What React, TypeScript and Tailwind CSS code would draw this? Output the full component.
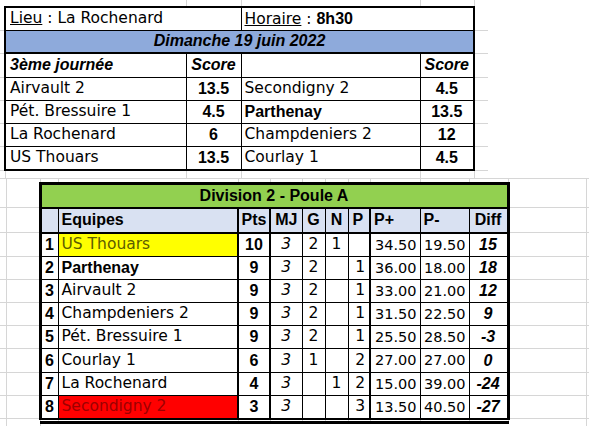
import React from 'react';

const gl = 'border-[#d6d6d6]';
const bold = "font-['Liberation_Sans'] font-bold text-[16px]";
const head = 'bg-[#d9e1f2]';

const matches = [
  { home: 'Airvault 2', hs: '13.5', away: 'Secondigny 2', as: '4.5' },
  { home: 'Pét. Bressuire 1', hs: '4.5', away: 'Parthenay', as: '13.5', awayBold: true },
  { home: 'La Rochenard', hs: '6', away: 'Champdeniers 2', as: '12' },
  { home: 'US Thouars', hs: '13.5', away: 'Courlay 1', as: '4.5' },
];

const standings = [
  { rank: 1, team: 'US Thouars', pts: 10, mj: 3, g: 2, n: 1, p: '', pp: '34.50', pm: '19.50', diff: '15', tone: 'yellow' },
  { rank: 2, team: 'Parthenay', pts: 9, mj: 3, g: 2, n: '', p: 1, pp: '36.00', pm: '18.00', diff: '18', teamBold: true },
  { rank: 3, team: 'Airvault 2', pts: 9, mj: 3, g: 2, n: '', p: 1, pp: '33.00', pm: '21.00', diff: '12' },
  { rank: 4, team: 'Champdeniers 2', pts: 9, mj: 3, g: 2, n: '', p: 1, pp: '31.50', pm: '22.50', diff: '9' },
  { rank: 5, team: 'Pét. Bressuire 1', pts: 9, mj: 3, g: 2, n: '', p: 1, pp: '25.50', pm: '28.50', diff: '-3' },
  { rank: 6, team: 'Courlay 1', pts: 6, mj: 3, g: 1, n: '', p: 2, pp: '27.00', pm: '27.00', diff: '0' },
  { rank: 7, team: 'La Rochenard', pts: 4, mj: 3, g: '', n: 1, p: 2, pp: '15.00', pm: '39.00', diff: '-24' },
  { rank: 8, team: 'Secondigny 2', pts: 3, mj: 3, g: '', n: '', p: 3, pp: '13.50', pm: '40.50', diff: '-27', tone: 'red' },
];

const rowHeights = ['h-[24px]', 'h-[23px]', 'h-[23px]', 'h-[23px]', 'h-[23px]', 'h-[24px]', 'h-[23px]', 'h-[23px]'];

function TopSheet() {
  const rows = ['h-[24px]', 'h-[23px]', 'h-[23px]', 'h-[23px]', 'h-[24px]'];
  return (
    <table className="table-fixed w-[589px]">
      <colgroup>
        <col className="w-[5px]" />
        <col className="w-[181px]" />
        <col className="w-[55px]" />
        <col className="w-[179px]" />
        <col className="w-[54px]" />
        <col className="w-[14px]" />
        <col className="w-[101px]" />
      </colgroup>
      <tbody>
        <tr className="h-[7px]">
          <td />
          <td className={`border-r ${gl}`} />
          <td className={`border-r ${gl}`} />
          <td className={`border-r ${gl}`} />
          <td className={`border-r ${gl}`} />
          <td />
          <td />
        </tr>
        <tr className="h-[23px]">
          <td className={`border-b ${gl}`} />
          <td colSpan={2} className="border-t-2 border-l-2 border-b border-r border-black pl-[4px]">
            <span className="underline">Lieu</span> : La Rochenard
          </td>
          <td colSpan={2} className="border-t-2 border-r-2 border-b border-black pl-[3px]">
            <span className="underline">Horaire</span> : <span className={bold}>8h30</span>
          </td>
          <td className={`border-b ${gl}`} />
          <td />
        </tr>
        <tr className="h-[23px]">
          <td className={`border-b ${gl}`} />
          <td colSpan={4} className={`border-l-2 border-r-2 border-b-2 border-black bg-[#8eaadb] text-center italic ${bold}`}>
            Dimanche 19 juin 2022
          </td>
          <td className={`border-b ${gl}`} />
          <td />
        </tr>
        <tr className="h-[24px]">
          <td className={`border-b ${gl}`} />
          <td className={`border-l-2 border-r border-b border-black pl-[4px] italic ${bold}`}>3ème journée</td>
          <td className={`border-r border-b border-black text-center italic ${bold}`}>Score</td>
          <td className="border-r border-b border-black" />
          <td className={`border-r-2 border-b border-black text-center italic ${bold}`}>Score</td>
          <td className={`border-b ${gl}`} />
          <td />
        </tr>
        {matches.map((m, i) => (
          <tr key={m.home} className={rows[i + 1]}>
            <td className={`border-b ${gl}`} />
            <td className={`border-l-2 border-r ${i === 3 ? 'border-b-2' : 'border-b'} border-black pl-[4px]`}>{m.home}</td>
            <td className={`border-r ${i === 3 ? 'border-b-2' : 'border-b'} border-black text-center ${bold}`}>{m.hs}</td>
            <td className={`border-r ${i === 3 ? 'border-b-2' : 'border-b'} border-black pl-[3px] ${m.awayBold ? bold : ''}`}>{m.away}</td>
            <td className={`border-r-2 ${i === 3 ? 'border-b-2' : 'border-b'} border-black text-center ${bold}`}>{m.as}</td>
            <td className={`border-b ${gl}`} />
            <td />
          </tr>
        ))}
        <tr className="h-[8px]">
          <td className={`border-r border-b ${gl}`} />
          <td className={`border-r border-b ${gl}`} />
          <td className={`border-r border-b ${gl}`} />
          <td className={`border-r border-b ${gl}`} />
          <td className={`border-r border-b ${gl}`} />
          <td className={`border-b ${gl}`} />
          <td className={`border-b ${gl}`} />
        </tr>
      </tbody>
    </table>
  );
}

function Margin() {
  return (
    <>
      <td className={`border-r border-b ${gl}`} />
      <td className={`border-b ${gl}`} />
    </>
  );
}

function Standings() {
  return (
    <table className="table-fixed w-[589px]">
      <colgroup>
        <col className="w-[6px]" />
        <col className="w-[34px]" />
        <col className="w-[18px]" />
        <col className="w-[180px]" />
        <col className="w-[32px]" />
        <col className="w-[32px]" />
        <col className="w-[23px]" />
        <col className="w-[23px]" />
        <col className="w-[22px]" />
        <col className="w-[50px]" />
        <col className="w-[49px]" />
        <col className="w-[39px]" />
        <col className="w-[78px]" />
        <col className="w-[3px]" />
      </colgroup>
      <tbody>
        <tr className="h-[5px]">
          {Array.from({ length: 13 }).map((_, i) => (
            <td key={i} className={`border-r ${gl}`} />
          ))}
          <td />
        </tr>
        <tr className="h-[24px]">
          <Margin />
          <td colSpan={10} className={`border-t-[3px] border-l-[3px] border-r-[3px] border-b-2 border-black bg-[#92d050] text-center ${bold}`}>
            Division 2 - Poule A
          </td>
          <Margin />
        </tr>
        <tr className={`h-[25px] ${bold}`}>
          <Margin />
          <td className={`border-l-[3px] border-r border-b-2 border-black ${head}`} />
          <td className={`border-r-2 border-b-2 border-black pl-[3px] ${head}`}>Equipes</td>
          <td className={`border-r-2 border-b-2 border-black text-center ${head}`}>Pts</td>
          <td className={`border-r border-b-2 border-black text-center ${head}`}>MJ</td>
          <td className={`border-r border-b-2 border-black text-center ${head}`}>G</td>
          <td className={`border-r border-b-2 border-black text-center ${head}`}>N</td>
          <td className={`border-r-2 border-b-2 border-black pl-[4px] ${head}`}>P</td>
          <td className={`border-r border-b-2 border-black pl-[3px] ${head}`}>P+</td>
          <td className={`border-r border-b-2 border-black pl-[3px] ${head}`}>P-</td>
          <td className={`border-r-[3px] border-b-2 border-black text-center ${head}`}>Diff</td>
          <Margin />
        </tr>
        {standings.map((s, i) => {
          const b = i === 7 ? 'border-b-2' : 'border-b';
          const fill =
            s.tone === 'yellow'
              ? 'bg-[#ffff00] text-[#5c5c00]'
              : s.tone === 'red'
              ? 'bg-[#ff0000] text-[#9c0000]'
              : '';
          return (
            <tr key={s.rank} className={rowHeights[i]}>
              <Margin />
              <td className={`border-l-[3px] border-r ${b} border-black text-center ${bold}`}>{s.rank}</td>
              <td className={`border-r-2 ${b} border-black pl-[3px] ${fill} ${s.teamBold ? bold : ''}`}>{s.team}</td>
              <td className={`border-r-2 ${b} border-black text-center ${bold}`}>{s.pts}</td>
              <td className={`border-r ${b} border-black text-center italic`}>{s.mj}</td>
              <td className={`border-r ${b} border-black text-center`}>{s.g}</td>
              <td className={`border-r ${b} border-black text-center`}>{s.n}</td>
              <td className={`border-r-2 ${b} border-black text-right pr-[4px]`}>{s.p}</td>
              <td className={`border-r ${b} border-black text-right pr-[3px] text-[14.5px]`}>{s.pp}</td>
              <td className={`border-r ${b} border-black text-right pr-[3px] text-[14.5px]`}>{s.pm}</td>
              <td className={`border-r-[3px] ${b} border-black text-center italic ${bold}`}>{s.diff}</td>
              <Margin />
            </tr>
          );
        })}
        <tr className="h-[4px]">
          {Array.from({ length: 13 }).map((_, i) => (
            <td key={i} className={`border-r ${gl}`} />
          ))}
          <td />
        </tr>
        <tr className="h-[4px]">
          <td className={`border-r ${gl}`} />
          <td className={`border-r ${gl}`} />
          {Array.from({ length: 10 }).map((_, i) => (
            <td key={i} className="border-t-[3px] border-black" />
          ))}
          <td className={`border-r ${gl}`} />
          <td />
        </tr>
      </tbody>
    </table>
  );
}

export default function App() {
  return (
    <div className="w-[589px] h-[426px] overflow-hidden bg-white text-black font-['DejaVu_Sans',sans-serif] text-[15.5px] leading-none">
      <TopSheet />
      <Standings />
    </div>
  );
}
